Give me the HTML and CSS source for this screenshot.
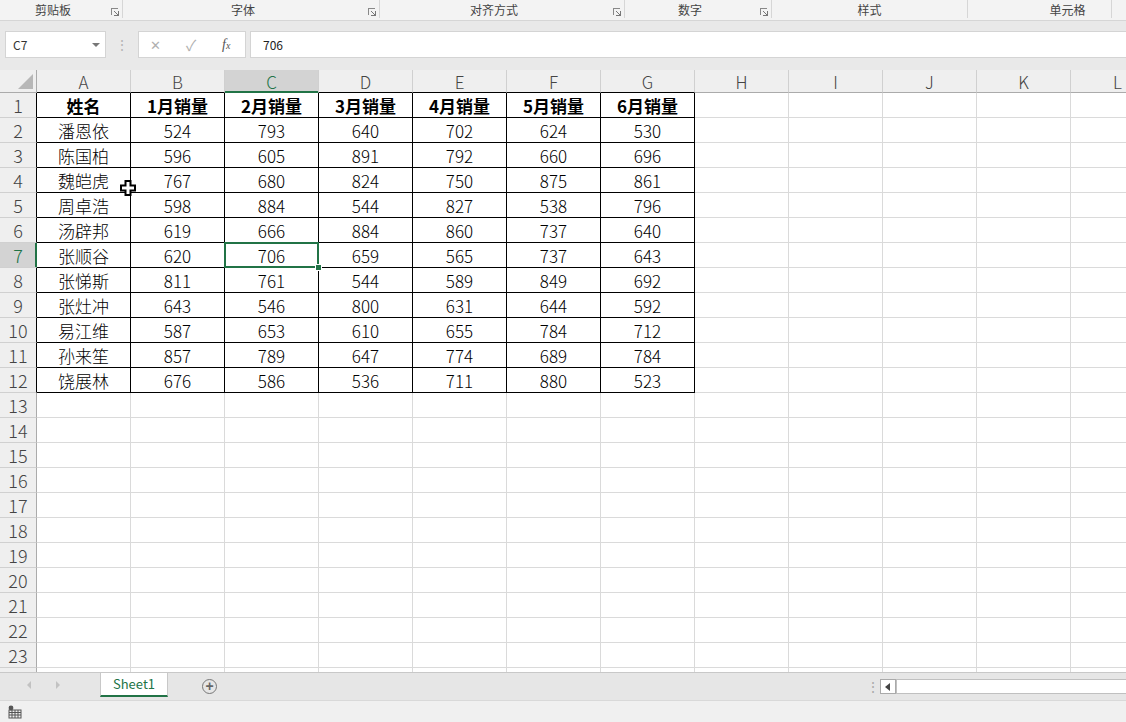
FILE: index.html
```html
<!DOCTYPE html>
<html lang="zh-CN">
<head>
    <meta charset="UTF-8">
    <meta name="viewport" content="width=device-width, initial-scale=1.0">
    <title>Book1 - Excel</title>
    <link rel="stylesheet" href="styles.css">
</head>
<body>

<div class="ribbon">
    <div class="grp" style="width:123px">剪贴板<i class="launch"></i></div>
    <div class="grp" style="width:257px">字体<i class="launch"></i></div>
    <div class="grp" style="width:245px">对齐方式<i class="launch"></i></div>
    <div class="grp" style="width:147px">数字<i class="launch"></i></div>
    <div class="grp nolaunch" style="width:196px">样式</div>
    <div class="grp cells" style="width:144px">单元格</div>
</div>

<div class="fbar">
    <div class="namebox">C7<span class="caret"></span></div>
    <div class="grip">⋮</div>
    <div class="fbtns">
        <span class="x">✕</span>
        <span class="ok">✓</span>
        <span class="fx">f<small>x</small></span>
    </div>
    <div class="finput">706</div>
</div>

<div class="sheet-wrap">
    <div class="sheet" id="sheet"></div>
    <svg class="cursor" width="16" height="16" viewBox="0 0 16 16">
        <polygon points="5.5,1 10.5,1 10.5,5.5 15,5.5 15,10.5 10.5,10.5 10.5,15 5.5,15 5.5,10.5 1,10.5 1,5.5 5.5,5.5" fill="#fff" stroke="#000" stroke-width="2"/>
    </svg>
</div>

<div class="tabs">
    <div class="nav"><span class="tri left"></span><span class="tri right"></span></div>
    <div class="tab">Sheet1</div>
    <div class="add">+</div>
    <div class="spacer"></div>
    <div class="tgrip">⋮</div>
    <div class="hscroll"><span class="arr"></span><span class="track"></span></div>
</div>

<div class="status">
    <svg width="14" height="14" viewBox="0 0 14 14">
        <circle cx="3" cy="3" r="2.4" fill="#555"/>
        <rect x="1" y="5" width="12" height="8" fill="none" stroke="#555"/>
        <path d="M1 7.5h12M1 10h12M4 5v8M7 5v8M10 5v8" stroke="#555" stroke-width="1"/>
    </svg>
</div>

<script>
    const names = ['潘恩依','陈国柏','魏皑虎','周卓浩','汤辟邦','张顺谷','张悌斯','张灶冲','易江维','孙来笙','饶展林'];
    const sales = [
        [524,793,640,702,624,530],
        [596,605,891,792,660,696],
        [767,680,824,750,875,861],
        [598,884,544,827,538,796],
        [619,666,884,860,737,640],
        [620,706,659,565,737,643],
        [811,761,544,589,849,692],
        [643,546,800,631,644,592],
        [587,653,610,655,784,712],
        [857,789,647,774,689,784],
        [676,586,536,711,880,523]
    ];
    const letters = 'ABCDEFGHIJKL';
    const sheet = document.getElementById('sheet');
    let html = '<div class="corner"><span></span></div>';

    for (let c = 0; c < letters.length; c++) {
        let cls = 'ch';
        if (c < 7) cls += ' tt';
        if (c === 2) cls += ' on';
        html += '<div class="' + cls + '">' + letters[c] + '</div>';
    }

    // row 24 only peeks out under row 23, its number stays hidden
    for (let r = 1; r <= 24; r++) {
        let rcls = 'rh';
        if (r <= 12) rcls += ' tl';
        if (r === 7) rcls += ' on';
        html += '<div class="' + rcls + '">' + (r < 24 ? r : '') + '</div>';
        for (let c = 0; c < letters.length; c++) {
            let cls = 'c';
            let text = '';
            if (r <= 12 && c < 7) {
                cls += ' t';
                if (r === 1) {
                    cls += ' b';
                    text = c === 0 ? '姓名' : c + '月销量';
                } else {
                    text = c === 0 ? names[r - 2] : sales[r - 2][c - 1];
                }
            }
            if (r === 7 && c === 2) cls += ' sel';
            html += '<div class="' + cls + '">' + text + '</div>';
        }
    }
    sheet.innerHTML = html;
</script>
</body>
</html>
```

FILE: styles.css
```css
body {
    margin: 0;
    width: 1126px;
    height: 722px;
    overflow: hidden;
    background-color: #e9e9e9;
    font-family: "Noto Sans CJK SC", "Liberation Sans", sans-serif;
}

/* ribbon group labels */
.ribbon {
    display: flex;
    height: 20px;
    background-color: #f3f3f3;
    border-bottom: 1px solid #d6d6d6;
    overflow: hidden;
}
.grp {
    position: relative;
    flex: none;
    box-sizing: border-box;
    height: 18px;
    padding-right: 16px;
    border-right: 1px solid #d6d6d6;
    font-size: 12px;
    line-height: 20px;
    color: #444;
    text-align: center;
}
.grp.nolaunch {
    padding-right: 0;
}
.grp.cells {
    padding-right: 0;
    padding-left: 56px;
}
.launch {
    position: absolute;
    right: 4px;
    top: 8px;
    width: 6px;
    height: 6px;
    border-left: 1px solid #888;
    border-top: 1px solid #888;
}
.launch::after {
    content: "";
    position: absolute;
    right: -1px;
    bottom: -1px;
    width: 4px;
    height: 4px;
    background: linear-gradient(45deg, transparent 40%, #777 40%, #777 60%, transparent 60%);
    border-right: 1px solid #777;
    border-bottom: 1px solid #777;
}

/* formula bar */
.fbar {
    display: flex;
    height: 27px;
    margin-top: 10px;
    margin-bottom: 12px;
}
.namebox {
    position: relative;
    box-sizing: border-box;
    width: 101px;
    margin-left: 5px;
    padding-left: 7px;
    background-color: #fff;
    border: 1px solid #d4d4d4;
    font-size: 12px;
    line-height: 25px;
    color: #333;
}
.caret {
    position: absolute;
    right: 5px;
    top: 11px;
    border-left: 4px solid transparent;
    border-right: 4px solid transparent;
    border-top: 4px solid #777;
}
.grip {
    width: 32px;
    text-align: center;
    color: #b5b5b5;
    font-size: 14px;
    line-height: 27px;
}
.fbtns {
    position: relative;
    box-sizing: border-box;
    width: 108px;
    background-color: #fff;
    border: 1px solid #d4d4d4;
}
.fbtns span {
    position: absolute;
    top: 0;
    line-height: 25px;
    color: #b0b0b0;
}
.fbtns .x {
    left: 11px;
    font-size: 13px;
}
.fbtns .ok {
    left: 47px;
    font-size: 15px;
}
.fbtns .fx {
    left: 83px;
    font-family: "Liberation Serif", serif;
    font-style: italic;
    font-size: 14px;
    color: #555;
}
.fbtns .fx small {
    font-size: 10px;
}
.finput {
    flex: 1;
    box-sizing: border-box;
    margin-left: 4px;
    padding-left: 12px;
    background-color: #fff;
    border: 1px solid #d4d4d4;
    border-right: none;
    font-size: 12px;
    line-height: 25px;
    color: #222;
}

/* grid */
.sheet-wrap {
    position: relative;
}
.sheet {
    display: grid;
    grid-template-columns: 37px repeat(12, 94px);
    grid-template-rows: 23px;
    grid-auto-rows: 25px;
    height: 602px;
    overflow: hidden;
    background-color: #fff;
}
.sheet > div {
    box-sizing: border-box;
    display: flex;
    align-items: center;
    justify-content: center;
    white-space: nowrap;
    line-height: 1;
}
.corner {
    position: relative;
    background-color: #efefef;
    border-right: 1px solid #ababab;
    border-bottom: 1px solid #ababab;
}
.corner span {
    position: absolute;
    right: 3px;
    bottom: 3px;
    border-left: 15px solid transparent;
    border-bottom: 15px solid #b7b7b7;
}
.ch {
    background-color: #efefef;
    border-right: 1px solid #d0d0d0;
    border-bottom: 1px solid #ababab;
    color: #444;
    font-size: 17px;
    font-weight: 300;
}
.ch.tt {
    border-bottom-color: #000;
}
.ch.on {
    background-color: #d3d3d3;
    color: #217346;
    border-bottom-color: #217346;
    box-shadow: inset 0 -1px 0 #217346;
}
.rh {
    background-color: #efefef;
    border-right: 1px solid #ababab;
    border-bottom: 1px solid #d0d0d0;
    color: #444;
    font-size: 18px;
    font-weight: 300;
}
.rh.tl {
    border-right-color: #000;
}
.rh.on {
    background-color: #d3d3d3;
    color: #217346;
    border-right-color: #217346;
    box-shadow: inset -1px 0 0 #217346;
}
.c {
    border-right: 1px solid #dadada;
    border-bottom: 1px solid #dadada;
    font-size: 17px;
    font-weight: 300;
    color: #000;
}
.c.t {
    border-right-color: #000;
    border-bottom-color: #000;
}
.c.b {
    font-weight: bold;
}
.sel {
    position: relative;
}
.sel::after {
    content: "";
    position: absolute;
    left: -1px;
    top: -1px;
    right: -1px;
    bottom: -1px;
    border: 2px solid #217346;
}
.sel::before {
    content: "";
    position: absolute;
    right: -4px;
    bottom: -4px;
    width: 5px;
    height: 5px;
    background-color: #217346;
    border: 1px solid #fff;
    z-index: 2;
}
.cursor {
    position: absolute;
    left: 120px;
    top: 110px;
}

/* sheet tabs */
.tabs {
    display: flex;
    align-items: flex-start;
    height: 27px;
    background-color: #e6e6e6;
    border-top: 1px solid #c8c8c8;
}
.nav {
    display: flex;
    width: 100px;
    height: 24px;
    align-items: center;
}
.tri {
    width: 0;
    height: 0;
    border-top: 4px solid transparent;
    border-bottom: 4px solid transparent;
}
.tri.left {
    margin-left: 27px;
    border-right: 4px solid #c2c2c2;
}
.tri.right {
    margin-left: 25px;
    border-left: 4px solid #c2c2c2;
}
.tab {
    box-sizing: border-box;
    width: 68px;
    height: 24px;
    background-color: #fff;
    border-left: 1px solid #c8c8c8;
    border-right: 1px solid #c8c8c8;
    border-bottom: 2px solid #217346;
    color: #217346;
    font-size: 13px;
    line-height: 22px;
    text-align: center;
}
.add {
    box-sizing: border-box;
    width: 15px;
    height: 15px;
    margin-left: 34px;
    margin-top: 6px;
    border: 1px solid #777;
    border-radius: 50%;
    color: #666;
    font-family: "Liberation Sans", sans-serif;
    font-size: 14px;
    font-weight: bold;
    line-height: 12px;
    text-align: center;
}
.spacer {
    flex: 1;
}
.tgrip {
    width: 14px;
    color: #aaa;
    font-size: 14px;
    line-height: 27px;
}
.hscroll {
    display: flex;
    width: 246px;
    height: 15px;
    margin-top: 6px;
}
.arr {
    position: relative;
    box-sizing: border-box;
    width: 16px;
    height: 15px;
    background-color: #fff;
    border: 1px solid #aaa;
}
.arr::after {
    content: "";
    position: absolute;
    left: 4px;
    top: 3px;
    border-top: 4px solid transparent;
    border-bottom: 4px solid transparent;
    border-right: 5px solid #444;
}
.track {
    flex: 1;
    background-color: #fff;
    border: 1px solid #c0c0c0;
    border-right: none;
}

/* status bar */
.status {
    height: 21px;
    padding-left: 8px;
    background-color: #f0f0f0;
    border-top: 1px solid #d9d9d9;
    display: flex;
    align-items: center;
}
```
